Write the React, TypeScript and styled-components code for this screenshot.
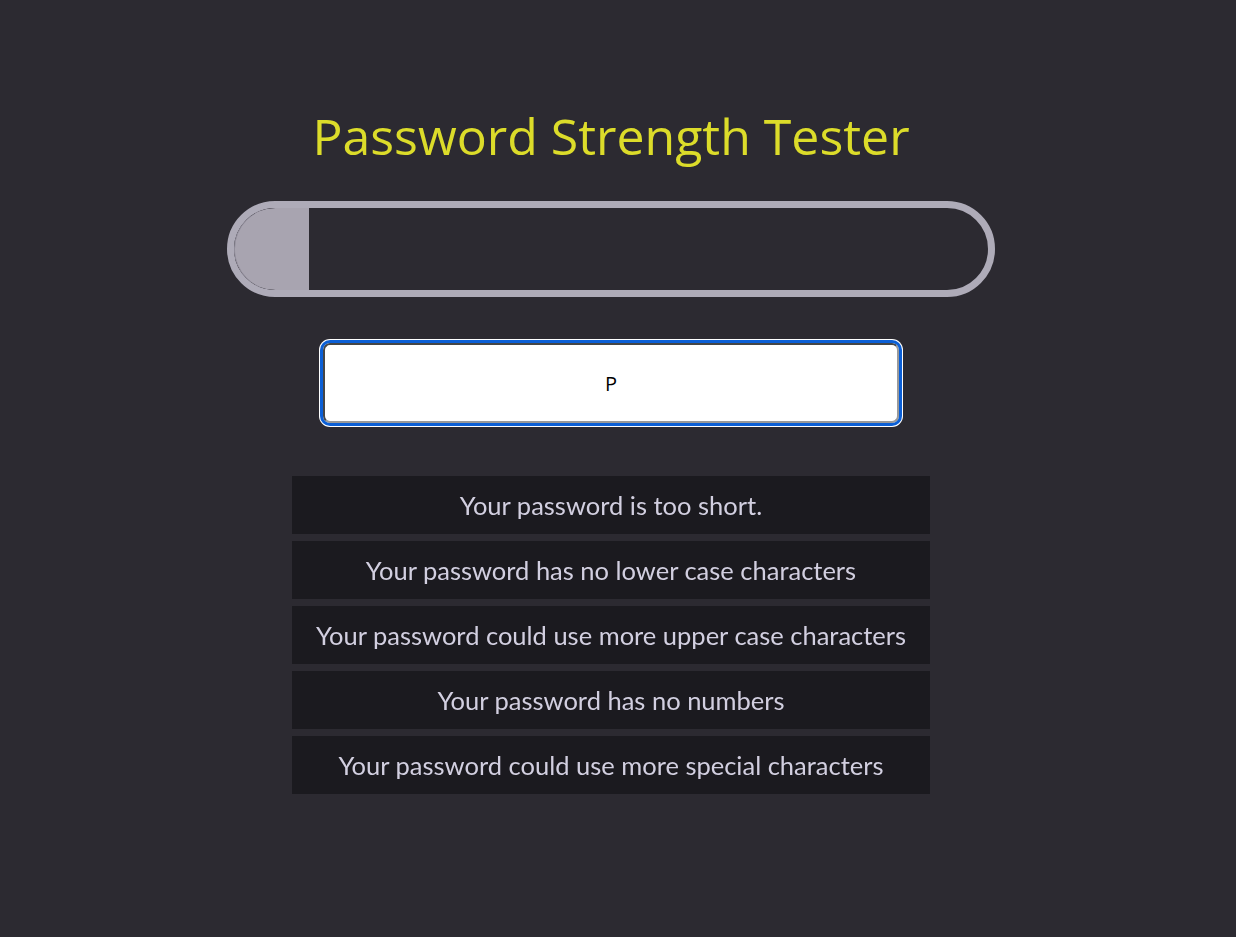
import * as React from 'react';
import styled, { createGlobalStyle } from 'styled-components';

const messages = [
  'Your password is too short.',
  'Your password has no lower case characters',
  'Your password could use more upper case characters',
  'Your password has no numbers',
  'Your password could use more special characters',
];

const GlobalStyle = createGlobalStyle`
  html, body {
    margin: 0;
    padding: 0;
    background: #2c2a31;
    min-height: 100%;
  }
  body {
    font-family: Lato, "Liberation Sans", sans-serif;
  }
`;

export default () => {
  const [value, setValue] = React.useState('P');
  const strength = 0.1;

  return (
    <Page>
      <GlobalStyle />
      <Title>Password Strength Tester</Title>
      <Meter>
        <MeterFill style={{ width: `${strength * 100}%` }} />
      </Meter>
      <PasswordInput
        type="text"
        autoFocus
        value={value}
        onChange={e => setValue(e.target.value)}
      />
      <Messages>
        {messages.map(msg => (
          <Message key={msg}>{msg}</Message>
        ))}
      </Messages>
    </Page>
  );
};

const Page = styled.div`
  display: flex;
  flex-direction: column;
  align-items: center;
  padding: 103px 14px 0 0;
  min-height: 937px;
  box-sizing: border-box;
`;

const Title = styled.h1`
  margin: 0;
  font-family: "Open Sans", sans-serif;
  font-weight: 400;
  font-size: 50px;
  line-height: 66px;
  color: #dcdc2a;
`;

const Meter = styled.div`
  margin-top: 32px;
  width: 768px;
  height: 96px;
  box-sizing: border-box;
  border: 7px solid #aeabb8;
  border-radius: 48px;
  overflow: hidden;
  background: #2c2a31;
`;

const MeterFill = styled.div`
  height: 100%;
  background: #a8a4b0;
  border-radius: 42px 0 0 42px;
  box-shadow: inset 1px 0 0 #8f8b99;
`;

const PasswordInput = styled.input`
  margin-top: 46px;
  width: 576px;
  height: 80px;
  box-sizing: border-box;
  border: 2px inset #9a9a9a;
  border-radius: 7px;
  background: #fff;
  text-align: center;
  font-family: "Open Sans", sans-serif;
  font-size: 20px;
  color: #000;
  caret-color: #000;
  &:focus {
    outline: 3px solid #0b5fd6;
    outline-offset: 0;
    box-shadow: 0 0 0 4px #ffffff;
  }
`;

const Messages = styled.div`
  margin-top: 53px;
  width: 638px;
  display: flex;
  flex-direction: column;
  gap: 7px;
`;

const Message = styled.div`
  height: 58px;
  display: flex;
  align-items: center;
  justify-content: center;
  background: #1b1a1f;
  color: #d2cfe0;
  font-size: 25.5px;
`;
